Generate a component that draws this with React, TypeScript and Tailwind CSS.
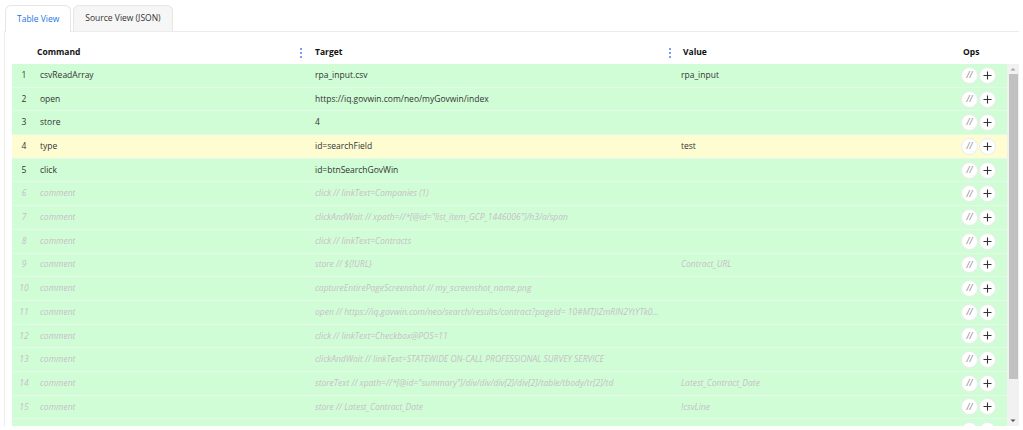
import React from "react";

type Row = { cmd: string; target: string; value?: string; kind?: "normal" | "comment" | "active" };

const rows: Row[] = [
  { cmd: "csvReadArray", target: "rpa_input.csv", value: "rpa_input" },
  { cmd: "open", target: "https://iq.govwin.com/neo/myGovwin/index" },
  { cmd: "store", target: "4" },
  { cmd: "type", target: "id=searchField", value: "test", kind: "active" },
  { cmd: "click", target: "id=btnSearchGovWin" },
  { cmd: "comment", target: "click // linkText=Companies (1)", kind: "comment" },
  { cmd: "comment", target: 'clickAndWait // xpath=//*[@id="list_item_GCP_1446006"]/h3/a/span', kind: "comment" },
  { cmd: "comment", target: "click // linkText=Contracts", kind: "comment" },
  { cmd: "comment", target: "store // ${!URL}", value: "Contract_URL", kind: "comment" },
  { cmd: "comment", target: "captureEntirePageScreenshot // my_screenshot_name.png", kind: "comment" },
  {
    cmd: "comment",
    target: "open // https://iq.govwin.com/neo/search/results/contract?pageId= 10#MTJlZmRlN2YtYTk0...",
    kind: "comment",
  },
  { cmd: "comment", target: "click // linkText=Checkbox@POS=11", kind: "comment" },
  { cmd: "comment", target: "clickAndWait // linkText=STATEWIDE ON-CALL PROFESSIONAL SURVEY SERVICE", kind: "comment" },
  {
    cmd: "comment",
    target: 'storeText // xpath=//*[@id="summary"]/div/div/div[2]/div[2]/table/tbody/tr[2]/td',
    value: "Latest_Contract_Date",
    kind: "comment",
  },
  { cmd: "comment", target: "store // Latest_Contract_Date", value: "!csvLine", kind: "comment" },
  { cmd: "", target: "", kind: "comment" },
];

const cols = "grid grid-cols-[24px_275px_366px_1fr_66px]";

const ResizeDots = () => (
  <span className="flex flex-col gap-[2px]">
    <span className="w-[2px] h-[2px] bg-[#7e9cf0]" />
    <span className="w-[2px] h-[2px] bg-[#7e9cf0]" />
    <span className="w-[2px] h-[2px] bg-[#7e9cf0]" />
  </span>
);

const OpButtons = () => (
  <div className="flex items-center justify-end gap-[1px] pr-[11px]">
    <button className="w-[17px] h-[17px] rounded-full bg-white border border-[#ececec] flex items-center justify-center text-[8.5px] italic text-[#808080] leading-none">
      //
    </button>
    <button className="w-[17px] h-[17px] rounded-full bg-white border border-[#ececec] flex items-center justify-center">
      <svg width="9" height="9" viewBox="0 0 9 9">
        <path d="M4.5 0.5v8M0.5 4.5h8" stroke="#333" strokeWidth="1.1" />
      </svg>
    </button>
  </div>
);

const TableRow = ({ row, index }: { row: Row; index: number }) => {
  const comment = row.kind === "comment";
  const bg = row.kind === "active" ? "bg-[#fefdd2]" : "bg-[#d0fdd6]";
  const text = comment ? "italic text-[#c8bec8]" : "text-[#333]";
  return (
    <div className={`${cols} h-[23.7px] items-center border-b border-[#e3fbe6] ${bg} ${text}`}>
      <span className="text-center">{row.cmd ? index + 1 : ""}</span>
      <span className="pl-1 truncate">{row.cmd}</span>
      <span className="pl-1 pr-2 truncate">{row.target}</span>
      <span className="pl-1 truncate">{row.value ?? ""}</span>
      <OpButtons />
    </div>
  );
};

export default function App() {
  return (
    <div className="w-[1023px] h-[430px] overflow-hidden bg-white text-[8.5px] font-['Open_Sans',sans-serif]">
      <div className="flex items-end pl-[5px] pt-[5px] h-[31px]">
        <div className="h-[27px] px-[11px] border border-b-0 border-[#e6e6e6] rounded-t-md bg-white flex items-center text-[#1a73e8] relative top-[1px]">
          Table View
        </div>
        <div className="h-[26px] px-[11px] ml-[2px] border border-b-0 border-[#e6e6e6] rounded-t-md bg-[#f6f6f6] flex items-center text-[#333]">
          Source View (JSON)
        </div>
      </div>
      <div className="ml-1 mr-1 border-l border-t border-[#ececec] pl-[7px] pt-[9px]">
        <div className={`${cols} h-[23px] items-center font-bold text-[#111] mr-[12px]`}>
          <span />
          <span className="pl-[1px] pr-[9px] flex items-center justify-between">
            Command
            <ResizeDots />
          </span>
          <span className="pl-1 pr-[6px] flex items-center justify-between">
            Target
            <ResizeDots />
          </span>
          <span className="pl-[6px]">Value</span>
          <span className="pl-[22px]">Ops</span>
        </div>
        <div className="flex h-[362px] overflow-hidden">
          <div className="flex-1">
            {rows.map((r, i) => (
              <TableRow key={i} row={r} index={i} />
            ))}
          </div>
          <div className="w-3 h-[362px] bg-[#f1f1f1] flex flex-col items-center">
            <svg width="12" height="10" viewBox="0 0 12 10">
              <path d="M3.5 6.5L6 4l2.5 2.5z" fill="#a3a3a3" />
            </svg>
            <div className="w-[9px] h-[305px] bg-[#c1c1c1]" />
            <div className="flex-1" />
            <svg width="12" height="10" viewBox="0 0 12 10">
              <path d="M3.5 3.5L6 6l2.5-2.5z" fill="#505050" />
            </svg>
          </div>
        </div>
      </div>
    </div>
  );
}
